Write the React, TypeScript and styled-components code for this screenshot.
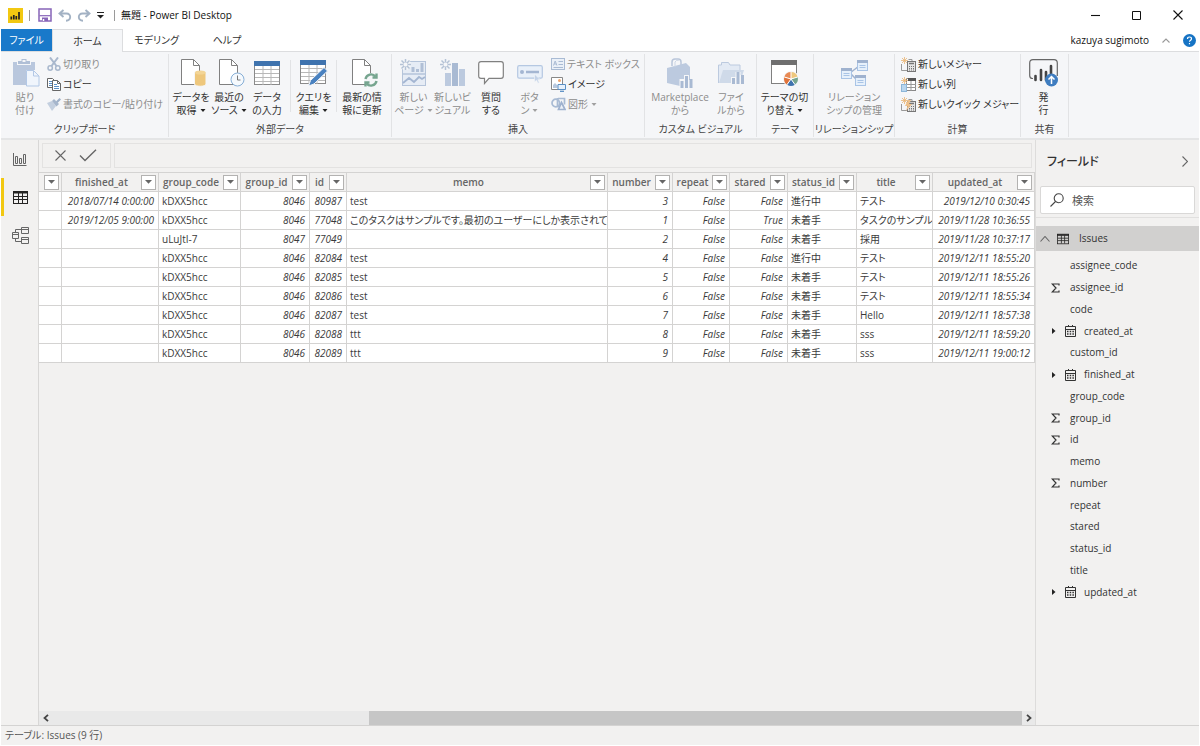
import React from 'react';
import styled, { createGlobalStyle, css } from 'styled-components';

const GlobalStyle = createGlobalStyle`
  *, *::before, *::after { box-sizing: border-box; }
  body {
    margin: 0;
    background: #fff;
    color: #333;
    font-family: 'Open Sans', 'Noto Sans CJK JP', sans-serif;
    font-size: 10px;
    line-height: 13px;
    font-feature-settings: 'palt';
  }
  button, input {
    font: inherit;
    font-feature-settings: inherit;
    color: inherit;
    margin: 0;
    padding: 0;
    border: 0;
    background: none;
  }
  svg { display: block; flex: none; }
`;

const Window = styled.div`
  min-height: 100vh;
  display: flex;
  flex-direction: column;
  padding: 0 1px 1px;
`;

/* ---------- title bar ---------- */

const TitleBar = styled.header`
  height: 29px;
  display: flex;
  align-items: center;
  padding: 1px 1px 0 7px;
`;
const IconButton = styled.button<{ $w: number }>`
  width: ${(p) => p.$w}px;
  height: 20px;
  display: flex;
  align-items: center;
  justify-content: center;
`;
const TitleRule = styled.span`
  width: 1px;
  height: 11px;
  margin: 0 6px;
  background: #9a9a9a;
`;
const Title = styled.h1`
  margin: 0;
  font-size: 10px;
  line-height: 16px;
  font-weight: 400;
  color: #111;
  flex: 1;
`;

/* ---------- tabs ---------- */

const TabRow = styled.nav`
  height: 23px;
  display: flex;
  background: linear-gradient(#dcdddf, #dcdddf) bottom / 100% 1px no-repeat;
`;
const Tab = styled.button<{ $w: number; $kind?: 'file' | 'active' }>`
  width: ${(p) => p.$w}px;
  height: 22px;
  ${(p) => p.$kind === 'file' && css`
    background: #1979ca;
    color: #fff;
  `}
  ${(p) => p.$kind === 'active' && css`
    height: 23px;
    background: #f5f6f8;
    border: 1px solid #dcdddf;
    border-bottom: 0;
  `}
`;
const Account = styled.div`
  margin-left: auto;
  height: 22px;
  display: flex;
  align-items: center;
  gap: 3px;
  padding-right: 3px;
  color: #111;
`;

/* ---------- ribbon ---------- */

const Ribbon = styled.section`
  height: 88px;
  display: flex;
  background: #f5f6f8;
  border-bottom: 2px solid #e4e5e6;
`;
const Group = styled.div<{ $w: number }>`
  width: ${(p) => p.$w}px;
  flex: none;
  margin: 2px 0 1px;
  display: flex;
  flex-direction: column;
  border-right: 1px solid #e2e3e5;
`;
const GroupBody = styled.div<{ $pad?: number }>`
  flex: 1;
  display: flex;
  padding-left: ${(p) => p.$pad ?? 0}px;
`;
const GroupLabel = styled.div`
  height: 16px;
  line-height: 16px;
  text-align: center;
  white-space: nowrap;
  color: #444;
`;
const BigButton = styled.button<{ $w: number; $off?: boolean }>`
  width: ${(p) => p.$w}px;
  display: flex;
  flex-direction: column;
  align-items: center;
  gap: 3px;
  padding-top: 4px;
  white-space: nowrap;
  color: ${(p) => (p.$off ? '#8c8c8c' : '#333')};
`;
const BigIcon = styled.span`
  height: 30px;
  display: flex;
  align-items: center;
  justify-content: center;
`;
const SmallColumn = styled.div`
  display: flex;
  flex-direction: column;
  padding-left: 2px;
`;
const SmallButton = styled.button<{ $off?: boolean }>`
  height: 20px;
  display: flex;
  align-items: center;
  gap: 2px;
  white-space: nowrap;
  color: ${(p) => (p.$off ? '#8c8c8c' : '#333')};
`;
const Divider = styled.span`
  width: 1px;
  height: 52px;
  margin: 6px 4px 0;
  background: #e2e3e5;
`;
const CaretBox = styled.span`
  display: inline-block;
  vertical-align: middle;
  margin-left: 3px;
`;

/* ---------- body ---------- */

const Body = styled.div`
  flex: 1;
  display: flex;
  background: #f2f1f0;
`;
const SideNav = styled.nav`
  width: 38px;
  border-right: 1px solid #d8d7d6;
`;
const SideButton = styled.button<{ $on?: boolean }>`
  width: 37px;
  height: 38px;
  display: flex;
  align-items: center;
  justify-content: center;
  padding-right: 2px;
  border-left: 3px solid ${(p) => (p.$on ? '#f2c811' : 'transparent')};
`;
const Main = styled.main`
  flex: 1;
  min-width: 0;
  display: flex;
  flex-direction: column;
`;
const FormulaBar = styled.div`
  height: 32px;
  display: flex;
  gap: 3px;
  padding: 3px 3px 4px;
`;
const FormulaActions = styled.div`
  width: 69px;
  display: flex;
  align-items: center;
  border: 1px solid #e3e2e1;
  padding-left: 3px;
`;
const FormulaInput = styled.input`
  flex: 1;
  border: 1px solid #e3e2e1;
  padding: 0 6px;
`;
const Grid = styled.table`
  width: 100%;
  table-layout: fixed;
  border-collapse: separate;
  border-spacing: 0;
  border-top: 1px solid #d4d3d2;
  color: #3a3a3a;
`;
const HeadCell = styled.th`
  height: 19px;
  padding: 0 2px 0 0;
  font-weight: 600;
  color: #666;
  border-right: 1px solid #d4d3d2;
  border-bottom: 1px solid #d4d3d2;
`;
const HeadInner = styled.div`
  height: 18px;
  display: flex;
  align-items: center;
`;
const HeadText = styled.span`
  flex: 1;
  text-align: center;
`;
const FilterButton = styled.button`
  width: 15px;
  height: 15px;
  display: flex;
  align-items: center;
  justify-content: center;
  background: #fff;
  border: 1px solid #b3b2b1;
`;
const Cell = styled.td<{ $num?: boolean }>`
  height: 19px;
  padding: 0 4px 0 3px;
  line-height: 18px;
  overflow: hidden;
  white-space: nowrap;
  background: #fff;
  border-right: 1px solid #d4d3d2;
  border-bottom: 1px solid #d4d3d2;
  ${(p) => p.$num && css`
    text-align: right;
    font-style: italic;
  `}
`;
const ScrollBar = styled.div`
  height: 14px;
  margin-top: auto;
  display: flex;
  background: #e9e9e9;
`;
const ScrollButton = styled.button`
  width: 13px;
  display: flex;
  align-items: center;
  justify-content: center;
`;
const ScrollGap = styled.span`
  flex: 317;
`;
const ScrollThumb = styled.span`
  flex: 653;
  background: #c6c6c6;
`;

/* ---------- fields pane ---------- */

const Fields = styled.aside`
  width: 164px;
  border-left: 1px solid #dddcdb;
`;
const FieldsHead = styled.div`
  height: 46px;
  display: flex;
  align-items: center;
  justify-content: space-between;
  padding: 0 10px 3px 11px;
`;
const FieldsTitle = styled.h2`
  margin: 0;
  font-size: 12px;
  line-height: 18px;
  font-weight: 500;
  color: #333;
`;
const Search = styled.label`
  height: 28px;
  margin: 0 4px 3px 4px;
  display: flex;
  align-items: center;
  gap: 8px;
  padding-left: 9px;
  background: #fff;
  border: 1px solid #d9d8d7;
  border-radius: 2px;
`;
const SearchInput = styled.input`
  flex: 1;
  min-width: 0;
  font-size: 11px;
  outline: none;
  &::placeholder { color: #555; opacity: 1; }
`;
const FieldsRule = styled.hr`
  height: 1px;
  margin: 0 0 8px;
  border: 0;
  background: #e1e0df;
`;
const TableRow = styled.button`
  width: 100%;
  height: 25px;
  display: flex;
  align-items: center;
  gap: 7px;
  padding-left: 4px;
  background: #d1d0cf;
`;
const TableName = styled.span`
  margin-left: 3px;
`;
const FieldList = styled.ul`
  min-height: 348px;
  margin: 4px 0 0;
  padding: 0;
  list-style: none;
  display: grid;
  grid-auto-rows: 1fr;
`;
const Field = styled.li`
  display: flex;
  align-items: center;
  padding-left: 12px;
`;
const FieldMark = styled.span`
  width: 22px;
  padding-left: 3px;
`;
const FieldIcon = styled.span`
  width: 14px;
  margin-left: -5px;
  margin-right: 5px;
`;

const StatusBar = styled.footer`
  height: 20px;
  line-height: 19px;
  padding-left: 4px;
  background: #f2f1f0;
  border-top: 1px solid #d4d3d2;
  color: #555;
`;

/* ---------- icons ---------- */

const Caret = ({ off }: { off?: boolean }) => (
  <CaretBox>
    <svg width="6" height="4" viewBox="0 0 6 4"><path d="M.5 0h5L3 3z" fill={off ? '#a0a0a0' : '#222'} /></svg>
  </CaretBox>
);

const LogoIcon = () => (
  <svg width="15" height="15" viewBox="0 0 15 15">
    <rect width="15" height="15" fill="#f2c811" />
    <path d="M3.300 8.500v3M5.800 7v4.500M8.300 8v3.500M11 4v7.500" stroke="#222" strokeWidth="1.700" />
  </svg>
);
const SaveIcon = () => (
  <svg width="14" height="14" viewBox="0 0 14 14" fill="none" stroke="#8764b8" strokeWidth="1.5">
    <path d="M1 1h12v12H1z" />
    <path d="M1.500 7.700h11" strokeWidth="1.200" />
    <path d="M4 9.500h6V13H4z" fill="#8764b8" stroke="none" /><path d="M5.500 11v2" stroke="#fff" />
  </svg>
);
const UndoIcon = ({ flip }: { flip?: boolean }) => (
  <svg width="14" height="13" viewBox="0 0 14 13" fill="none" stroke="#a3b2c4" strokeWidth="1.9">
    <g transform={flip ? 'matrix(-1 0 0 1 14 0)' : undefined}>
      <path d="M5.500 1L1.500 4.500 5.500 8M1.800 4.500H8.500c5 0 5 7-.5 7.200" />
    </g>
  </svg>
);
const PasteIcon = () => (
  <svg width="31" height="28" viewBox="-3 0 31 28">
    <path d="M0 3h4v3h14V3h4v8h-9v15H0z" fill="#b9c7dd" />
    <path d="M5 5V2h3.500V0h5v2H17v3z" fill="#b0bfd6" /><rect x="9.500" y="1" width="3" height="2" fill="#f5f6f8" />
    <path d="M13.500 11.500h7l5.500 5.500v10h-12.500z" fill="#f0f5fc" stroke="#b3c8e6" />
    <path d="M20.500 11.500V17H26" fill="none" stroke="#b3c8e6" />
  </svg>
);
const CutIcon = () => (
  <svg width="14" height="14" viewBox="0 0 14 14" fill="none" stroke="#a9b8cd" strokeWidth="1.5">
    <path d="M3 0.500L9.500 9M11 0.500L4.500 9" strokeWidth="2" />
    <circle cx="3.200" cy="11" r="2.200" /><circle cx="10.800" cy="11" r="2.200" />
  </svg>
);
const CopyIcon = () => (
  <svg width="14" height="14" viewBox="0 0 14 14" fill="#fff" stroke="#666">
    <path d="M.5 1.500h5l2 2v7h-7z" /><path d="M2 4.500h3M2 6.500h3M2 8.500h3" stroke="#5b8fc4" />
    <path d="M5.500 3.500h5l3 3v7h-8z" /><path d="M10.500 3.500v3h3" fill="none" /><path d="M7 7.500h3M7 9.500h5M7 11.500h5" stroke="#5b8fc4" />
  </svg>
);
const BrushIcon = () => (
  <svg width="14" height="13" viewBox="0 0 14 13">
    <path d="M0 5l5-2 4 5-4 5z" fill="#c3cfdf" /><path d="M5 3l2-2 5 5-2.500 2.500z" fill="#a6b6cc" /><path d="M9 3.500L12.500 0 14 1.500 10.500 5z" fill="#9eb0c8" />
  </svg>
);
const PagePath = () => (
  <>
    <path d="M.5.5h12l6 6v19H.5z" fill="#fff" stroke="#808080" />
    <path d="M12.500.5v6h6" fill="none" stroke="#808080" />
  </>
);
const GetDataIcon = () => (
  <svg width="31" height="28" viewBox="-5 0 31 28">
    <PagePath />
    <path d="M13.500 13v12c0 3 11.500 3 11.500 0V13z" fill="#eec77c" stroke="#f5f6f8" /><ellipse cx="19.300" cy="13.500" rx="5.300" ry="2" fill="#f3d596" />
  </svg>
);
const RecentIcon = () => (
  <svg width="31" height="28" viewBox="-5 0 31 28">
    <PagePath />
    <circle cx="18.500" cy="20.500" r="6.500" fill="#f5f9fd" stroke="#86aed6" /><path d="M18.500 16.500v4.500h3" fill="none" stroke="#777" />
  </svg>
);
const TablePaths = () => (
  <>
    <rect x=".5" y=".5" width="25" height="23" fill="#fff" stroke="#8a8a8a" />
    <path d="M1 8.500h24M1 12.500h24M1 16.500h24M1 20.500h24M9 5v19M17 5v19" stroke="#b8b8b8" />
    <rect width="26" height="5" fill="#3f73ae" />
  </>
);
const EnterDataIcon = () => (
  <svg width="26" height="24" viewBox="0 0 26 24"><TablePaths /></svg>
);
const EditQueryIcon = () => (
  <svg width="28" height="28" viewBox="0 0 28 28">
    <g transform="translate(0 1)"><TablePaths /></g>
    <path d="M8.500 27l2-5.500L24 8.500l3.500 3.500L14 25z" fill="#4a82c0" stroke="#f5f6f8" />
  </svg>
);
const RefreshIcon = () => (
  <svg width="31" height="28" viewBox="-5 0 31 28">
    <PagePath />
    <circle cx="19" cy="21" r="7" fill="#f5f6f8" />
    <g fill="none" stroke="#76a58f" strokeWidth="2.400">
      <path d="M13.500 20c1-5 7-6 10-2.500M24.500 22c-1 5-7 6-10 2.500" /><path d="M24.500 14.500v4h-4M13.500 27.500v-4h4" />
    </g>
  </svg>
);
const Burst = () => (
  <>
    <circle cx="5.500" cy="5.500" r="5.500" fill="#f5f6f8" />
    <path d="M5.500 0v11M0 5.500h11M1.500 1.500l8 8M9.500 1.500l-8 8" stroke="#b4c2d5" strokeWidth="1.500" />
    <circle cx="5.500" cy="5.500" r="2" fill="#f5f6f8" />
  </>
);
const NewPageIcon = () => (
  <svg width="27" height="28" viewBox="0 0 27 28">
    <rect x="2.500" y="2.500" width="23" height="24" fill="#e6ecf5" stroke="#b5c4da" /><path d="M2.500 15h23" stroke="#b5c4da" strokeWidth="1.500" />
    <path d="M13 8v5M17.500 10v3M22 4v9" stroke="#b0bfd6" strokeWidth="3" />
    <path d="M3 24l6-5 5 4 5-5 3 2 3-2" fill="none" stroke="#a4b6d2" strokeWidth="1.800" />
    <Burst />
  </svg>
);
const NewVisualIcon = () => (
  <svg width="26" height="28" viewBox="0 0 26 28">
    <path d="M5 14h6v13H5z" fill="#bccadf" /><path d="M12 4h6v23h-6z" fill="#a9bad3" /><path d="M19 10h6v17h-6z" fill="#bccadf" />
    <Burst />
  </svg>
);
const QuestionIcon = () => (
  <svg width="26" height="24" viewBox="0 0 26 24">
    <path d="M3 .7h20q2.300 0 2.300 2.300v12q0 2.300-2.300 2.300H11L6.500 22.500V17.300H3Q.7 17.300.7 15V3Q.7.7 3 .7z" fill="#fff" stroke="#808080" strokeWidth="1.200" />
  </svg>
);
const ButtonIcon = () => (
  <svg width="26" height="22" viewBox="0 -3 26 22">
    <rect x=".7" y=".7" width="24.600" height="12.500" rx="1.500" fill="#e9f0f9" stroke="#b5c8e2" strokeWidth="1.200" />
    <circle cx="5" cy="7" r="2" fill="#a4b6d2" /><path d="M9 7h13" stroke="#a4b6d2" strokeWidth="2.500" />
    <path d="M17.500 9v8l2-1.800 1.500 3 1.300-.7-1.500-2.800h2.500z" fill="#c3d2e8" stroke="#f5f6f8" strokeWidth=".6" />
  </svg>
);
const TextBoxIcon = () => (
  <svg width="14" height="12" viewBox="0 0 14 12" fill="none" stroke="#a9bbd4">
    <rect x=".5" y=".5" width="13" height="11" fill="#eaf0f8" /><path d="M2.500 7.500l1.700-4.500 1.700 4.500M3.200 6h2M7.500 3.500H12M7.500 6.500H12M2.500 9.500H12" />
  </svg>
);
const ImageIcon = () => (
  <svg width="15" height="15" viewBox="0 0 15 15">
    <path d="M.5.5h11v12H.5z" fill="#fff" stroke="#888" /><circle cx="8.500" cy="3.500" r="1.500" fill="#eea56d" />
    <path d="M2 11V8l2-2 2.500 2.500V11z" fill="#b8c8dd" />
    <path d="M7 7.500h7.500v5H7z" fill="#e8f1fb" stroke="#5b8fc4" /><path d="M9 14.300h4" stroke="#5b8fc4" strokeWidth="1.300" />
  </svg>
);
const ShapesIcon = () => (
  <svg width="15" height="14" viewBox="0 0 15 14" fill="none" strokeWidth="1.700">
    <circle cx="4.800" cy="6" r="3.800" stroke="#a9bbd4" /><path d="M7 1.500h6.500v6" stroke="#a9bbd4" /><path d="M6.500 1v8.500H9" stroke="#a9bbd4" />
    <path d="M10.500 5.500l3.500 7H7.500z" fill="#eef2f8" stroke="#9fb2cf" />
  </svg>
);
const MarketIcon = () => (
  <svg width="28" height="30" viewBox="0 0 28 30">
    <path d="M6 8V4q0-3 3-3h3q3 0 3 3v5" fill="none" stroke="#b9c6da" strokeWidth="1.500" />
    <path d="M1 10L20 5l4 4v16l-10 3-13-3z" fill="#bccadf" /><path d="M9 9V4q1-2 4-2" fill="none" stroke="#ccd6e5" />
    <path d="M16 30V21M20.500 30V17M25 30V22" stroke="#f5f6f8" strokeWidth="5" /><path d="M16 30V23M20.500 30V18M25 30V21" stroke="#a9bad3" strokeWidth="3" />
  </svg>
);
const FileVisualIcon = () => (
  <svg width="27" height="26" viewBox="0 0 27 26">
    <path d="M.5 23V5h3V2.500h7L12 5h10v5" fill="#e3eaf4" stroke="#bccadf" /><path d="M1 23L5 10h21l-4 13z" fill="#cfdae9" />
    <path d="M15.500 24v-7M20 24V12M24.500 24v-9" stroke="#f5f6f8" strokeWidth="5" /><path d="M15.500 24v-6M20 24V12M24.500 24v-9" stroke="#a9bad3" strokeWidth="3" />
  </svg>
);
const ThemeIcon = () => (
  <svg width="28" height="28" viewBox="0 0 28 28">
    <rect x=".5" y="1.500" width="25" height="23" fill="#fff" stroke="#808080" /><rect y="1" width="26" height="5" fill="#6f6f6f" />
    <circle cx="20" cy="20" r="8" fill="#f5f6f8" />
    <path d="M20 20V13a7 7 0 0 1 6.700 5z" fill="#eec77c" /><path d="M20 20l6.700-2a7 7 0 0 1-2.700 7.500z" fill="#76a58f" />
    <path d="M20 20l4 5.700a7 7 0 0 1-8 0z" fill="#3f73ae" /><path d="M20 20l-4 5.700a7 7 0 0 1-2.700-7.700z" fill="#e0743c" /><path d="M20 20l-6.700-2A7 7 0 0 1 20 13z" fill="#e88a54" />
    <path d="M20 20v-7M20 20l6.700-2M20 20l4 5.700M20 20l-4 5.700M20 20l-6.700-2" stroke="#fff" />
  </svg>
);
const RelationIcon = () => (
  <svg width="27" height="26" viewBox="0 0 27 26">
    <path d="M9 13L18 6M9 13l7 7" stroke="#9fb2cf" strokeWidth="1.500" />
    {[[0, 8], [16, 0], [14, 15]].map(([x, y]) => (
      <g key={x} transform={`translate(${x} ${y})`}>
        <rect x=".5" y=".5" width="10" height="10" fill="#e6f0fb" stroke="#a9c4e6" /><path d="M0 1.500h11" stroke="#9fb2cf" strokeWidth="3" /><path d="M2.500 5.500h6M2.500 7.500h6" stroke="#a9c4e6" />
      </g>
    ))}
  </svg>
);
const Spark = () => <path d="M3.500 0v7M0 3.500h7M1 1l5 5M6 1L1 6" stroke="#eab676" strokeWidth=".8" />;
const MeasureIcon = ({ quick }: { quick?: boolean }) => (
  <svg width="15" height="15" viewBox="0 0 15 15">
    <path d="M.5 7v6.500H6M7.500 2.500H11v2" fill="none" stroke="#999" /><rect x="6.500" y="4.500" width="8" height="10" fill="#e5e5e5" stroke="#777" />
    <path d="M8 6.500h5" stroke="#777" strokeWidth="1.500" /><path d="M8 9.500h5M8 11.500h5M8 13h5" stroke="#777" strokeDasharray="1 1" /><Spark />
    {quick && <path d="M7 3l3 0-2 4h3l-6 7 1.500-5H4z" fill="#eec08a" />}
  </svg>
);
const ColumnIcon = () => (
  <svg width="15" height="15" viewBox="0 0 15 15">
    <rect x="5.500" y="1.500" width="9" height="12" fill="#fff" stroke="#888" /><path d="M7 2.500h8" stroke="#555" strokeWidth="3" />
    <path d="M5 7.500h10M5 10.500h10M10 4v10" stroke="#999" /><rect x=".5" y="7.500" width="5" height="7" fill="#b9d6ee" stroke="#8db6d8" /><Spark />
  </svg>
);
const PublishIcon = () => (
  <svg width="29" height="28" viewBox="0 0 29 28">
    <path d="M4 19.500H3.500Q.7 19.500.7 16.500V4Q.7.7 4 .7H25Q28.300.7 28.300 4V17" fill="none" stroke="#666" strokeWidth="1.200" />
    <path d="M6.500 21v-4M12 21V11M17 21v-8M22 17V7" stroke="#444" strokeWidth="2.600" strokeLinecap="round" />
    <circle cx="22.500" cy="21" r="6.500" fill="#3f7dc0" /><path d="M22.500 25v-7M19.500 20.500l3-3 3 3" fill="none" stroke="#fff" strokeWidth="1.500" />
  </svg>
);
const ReportIcon = () => (
  <svg width="14" height="13" viewBox="0 0 14 13" fill="none" stroke="#666">
    <path d="M.5 0v12.500H13.500M2.500 10.500V3.500h2v7zM6.500 10.500v-5h2v5zM10.500 10.500V1.500h2v9z" />
  </svg>
);
const DataIcon = ({ w = 15 }: { w?: number }) => (
  <svg width={w} height={w} viewBox="0 0 15 15" fill="none" stroke="#252423">
    <rect x=".5" y="1.500" width="14" height="12" /><path d="M0 2.500h15" strokeWidth="2" /><path d="M1 6.500h13M1 9.500h13M5.500 3v10M9.500 3v10" />
  </svg>
);
const ModelIcon = () => (
  <svg width="17" height="17" viewBox="0 0 17 17" fill="none" stroke="#666">
    <path d="M.5 5.500h6v6h-6zM.5 7.500h6M9.500.5h7v6h-7zM9.500 2.500h7M9.500 10.500h7v6h-7zM9.500 12.500h7M3.500 5.500v-3h6M3.500 11.500v3h6" />
  </svg>
);
const SearchIcon = () => (
  <svg width="14" height="14" viewBox="0 0 14 14" fill="none" stroke="#444" strokeWidth="1.100">
    <circle cx="8.700" cy="5.300" r="4.500" /><path d="M5.500 8.500L.5 13.500" />
  </svg>
);
const CalendarIcon = () => (
  <svg width="12" height="12" viewBox="0 0 12 12" fill="none" stroke="#333">
    <path d="M.5 1.500h10v10H.5zM.5 4.500h10M3.500 0v2M7.500 0v2" /><path d="M2 6.500h7M2 9h7" strokeWidth="1.400" strokeDasharray="1.500 1.200" />
  </svg>
);
const SigmaIcon = () => (
  <svg width="9" height="10" viewBox="0 0 9 10" fill="none" stroke="#333" strokeWidth="1.200"><path d="M8 2.500V1H1.200L5 5 1.200 9H8V7.500" /></svg>
);
const Line = ({ d, w, h, color = '#444', sw = 1.1 }: { d: string; w: number; h: number; color?: string; sw?: number }) => (
  <svg width={w} height={h} viewBox={`0 0 ${w} ${h}`} fill="none" stroke={color} strokeWidth={sw}><path d={d} /></svg>
);

/* ---------- data ---------- */

type Column = { name: string; width?: number; num?: boolean };
const columns: Column[] = [
  { name: '', width: 23 },
  { name: 'finished_at', width: 97, num: true },
  { name: 'group_code', width: 82 },
  { name: 'group_id', width: 69, num: true },
  { name: 'id', width: 37, num: true },
  { name: 'memo' },
  { name: 'number', width: 65, num: true },
  { name: 'repeat', width: 57, num: true },
  { name: 'stared', width: 58, num: true },
  { name: 'status_id', width: 69 },
  { name: 'title', width: 76 },
  { name: 'updated_at', width: 102, num: true },
];
const rows = [
  ['', '2018/07/14 0:00:00', 'kDXX5hcc', '8046', '80987', 'test', '3', 'False', 'False', '進行中', 'テスト', '2019/12/10 0:30:45'],
  ['', '2019/12/05 9:00:00', 'kDXX5hcc', '8046', '77048', 'このタスクはサンプルです。最初のユーザーにしか表示されていま', '1', 'False', 'True', '未着手', 'タスクのサンプル', '2019/11/28 10:36:55'],
  ['', '', 'uLuJtI-7', '8047', '77049', '', '2', 'False', 'False', '未着手', '採用', '2019/11/28 10:37:17'],
  ['', '', 'kDXX5hcc', '8046', '82084', 'test', '4', 'False', 'False', '進行中', 'テスト', '2019/12/11 18:55:20'],
  ['', '', 'kDXX5hcc', '8046', '82085', 'test', '5', 'False', 'False', '未着手', 'テスト', '2019/12/11 18:55:26'],
  ['', '', 'kDXX5hcc', '8046', '82086', 'test', '6', 'False', 'False', '未着手', 'テスト', '2019/12/11 18:55:34'],
  ['', '', 'kDXX5hcc', '8046', '82087', 'test', '7', 'False', 'False', '未着手', 'Hello', '2019/12/11 18:57:38'],
  ['', '', 'kDXX5hcc', '8046', '82088', 'ttt', '8', 'False', 'False', '未着手', 'sss', '2019/12/11 18:59:20'],
  ['', '', 'kDXX5hcc', '8046', '82089', 'ttt', '9', 'False', 'False', '未着手', 'sss', '2019/12/11 19:00:12'],
];
const fields: [string, ('sum' | 'date')?][] = [
  ['assignee_code'], ['assignee_id', 'sum'], ['code'], ['created_at', 'date'], ['custom_id'],
  ['finished_at', 'date'], ['group_code'], ['group_id', 'sum'], ['id', 'sum'], ['memo'],
  ['number', 'sum'], ['repeat'], ['stared'], ['status_id'], ['title'], ['updated_at', 'date'],
];

type BigProps = { w: number; icon: React.ReactNode; lines: [string, string]; off?: boolean; caret?: boolean };
const Big = ({ w, icon, lines, off, caret }: BigProps) => (
  <BigButton $w={w} $off={off}>
    <BigIcon>{icon}</BigIcon>
    <span>{lines[0]}<br />{lines[1]}{caret && <Caret off={off} />}</span>
  </BigButton>
);

export default function App() {
  return (
    <Window>
      <GlobalStyle />
      <TitleBar>
        <LogoIcon />
        <TitleRule />
        <IconButton $w={18} aria-label="保存"><SaveIcon /></IconButton>
        <IconButton $w={21} aria-label="元に戻す"><UndoIcon /></IconButton>
        <IconButton $w={18} aria-label="やり直し"><UndoIcon flip /></IconButton>
        <IconButton $w={15} aria-label="カスタマイズ">
          <svg width="7" height="7" viewBox="0 0 7 7"><path d="M0 .5h7" stroke="#222" /><path d="M0 3h7L3.500 6.500z" fill="#222" /></svg>
        </IconButton>
        <TitleRule />
        <Title>無題 - Power BI Desktop</Title>
        <IconButton $w={41} aria-label="最小化"><Line w={9} h={9} d="M0 4.500h9" color="#111" /></IconButton>
        <IconButton $w={41} aria-label="最大化"><Line w={9} h={9} d="M.5.5h8v8h-8z" color="#111" sw={1} /></IconButton>
        <IconButton $w={41} aria-label="閉じる"><Line w={10} h={10} d="M.5.5l9 9M9.500.5l-9 9" color="#111" /></IconButton>
      </TitleBar>

      <TabRow>
        <Tab $w={51} $kind="file">ファイル</Tab>
        <Tab $w={71} $kind="active">ホーム</Tab>
        <Tab $w={67}>モデリング</Tab>
        <Tab $w={74}>ヘルプ</Tab>
        <Account>
          kazuya sugimoto
          <IconButton $w={28} aria-label="リボンを折りたたむ"><Line w={8} h={5} d="M.5 4.500L4 1l3.500 3.500" color="#999" /></IconButton>
          <IconButton $w={13} aria-label="ヘルプを表示">
            <svg width="13" height="13" viewBox="0 0 13 13">
              <circle cx="6.500" cy="6.500" r="6.500" fill="#1673c4" />
              <path d="M4.500 5q0-2 2-2t2 1.800q0 1-1.200 1.700-.8.500-.8 1.300M6.500 9v1.300" fill="none" stroke="#fff" strokeWidth="1.200" />
            </svg>
          </IconButton>
        </Account>
      </TabRow>

      <Ribbon>
        <Group $w={168}>
          <GroupBody $pad={4}>
            <Big w={40} off icon={<PasteIcon />} lines={['貼り', '付け']} />
            <SmallColumn>
              <SmallButton $off><CutIcon />切り取り</SmallButton>
              <SmallButton><CopyIcon />コピー</SmallButton>
              <SmallButton $off><BrushIcon />書式のコピー/貼り付け</SmallButton>
            </SmallColumn>
          </GroupBody>
          <GroupLabel>クリップボード</GroupLabel>
        </Group>
        <Group $w={223}>
          <GroupBody $pad={3}>
            <Big w={38} icon={<GetDataIcon />} lines={['データを', '取得']} caret />
            <Big w={38} icon={<RecentIcon />} lines={['最近の', 'ソース']} caret />
            <Big w={38} icon={<EnterDataIcon />} lines={['データ', 'の入力']} />
            <Divider />
            <Big w={37} icon={<EditQueryIcon />} lines={['クエリを', '編集']} caret />
            <Divider />
            <Big w={42} icon={<RefreshIcon />} lines={['最新の情', '報に更新']} />
          </GroupBody>
          <GroupLabel>外部データ</GroupLabel>
        </Group>
        <Group $w={253}>
          <GroupBody $pad={2}>
            <Big w={39} off icon={<NewPageIcon />} lines={['新しい', 'ページ']} caret />
            <Big w={39} off icon={<NewVisualIcon />} lines={['新しいビ', 'ジュアル']} />
            <Big w={38} icon={<QuestionIcon />} lines={['質問', 'する']} />
            <Big w={39} off icon={<ButtonIcon />} lines={['ボタ', 'ン']} caret />
            <SmallColumn>
              <SmallButton $off><TextBoxIcon />テキスト ボックス</SmallButton>
              <SmallButton><ImageIcon />イメージ</SmallButton>
              <SmallButton $off><ShapesIcon /><span>図形<Caret off /></span></SmallButton>
            </SmallColumn>
          </GroupBody>
          <GroupLabel>挿入</GroupLabel>
        </Group>
        <Group $w={112}>
          <GroupBody $pad={3}>
            <Big w={64} off icon={<MarketIcon />} lines={['Marketplace', 'から']} />
            <Big w={38} off icon={<FileVisualIcon />} lines={['ファイ', 'ルから']} />
          </GroupBody>
          <GroupLabel>カスタム ビジュアル</GroupLabel>
        </Group>
        <Group $w={57}>
          <GroupBody>
            <Big w={55} icon={<ThemeIcon />} lines={['テーマの切', 'り替え']} caret />
          </GroupBody>
          <GroupLabel>テーマ</GroupLabel>
        </Group>
        <Group $w={81}>
          <GroupBody>
            <Big w={80} off icon={<RelationIcon />} lines={['リレーション', 'シップの管理']} />
          </GroupBody>
          <GroupLabel>リレーションシップ</GroupLabel>
        </Group>
        <Group $w={126}>
          <GroupBody $pad={4}>
            <SmallColumn>
              <SmallButton><MeasureIcon />新しいメジャー</SmallButton>
              <SmallButton><ColumnIcon />新しい列</SmallButton>
              <SmallButton><MeasureIcon quick />新しいクイック メジャー</SmallButton>
            </SmallColumn>
          </GroupBody>
          <GroupLabel>計算</GroupLabel>
        </Group>
        <Group $w={48}>
          <GroupBody>
            <Big w={45} icon={<PublishIcon />} lines={['発', '行']} />
          </GroupBody>
          <GroupLabel>共有</GroupLabel>
        </Group>
      </Ribbon>

      <Body>
        <SideNav>
          <SideButton aria-label="レポート"><ReportIcon /></SideButton>
          <SideButton $on aria-label="データ"><DataIcon /></SideButton>
          <SideButton aria-label="モデル"><ModelIcon /></SideButton>
        </SideNav>
        <Main>
          <FormulaBar>
            <FormulaActions>
              <IconButton $w={28} aria-label="キャンセル"><Line w={11} h={11} d="M.5.5l10 10M10.500.5l-10 10" color="#666" /></IconButton>
              <IconButton $w={28} aria-label="確定"><Line w={18} h={13} d="M1 6.500l5 5L17 .8" color="#666" sw={1.4} /></IconButton>
            </FormulaActions>
            <FormulaInput aria-label="数式" />
          </FormulaBar>
          <Grid>
            <colgroup>
              {columns.map((c) => <col key={c.name} width={c.width} />)}
            </colgroup>
            <thead>
              <tr>
                {columns.map((c) => (
                  <HeadCell key={c.name}>
                    <HeadInner>
                      <HeadText>{c.name}</HeadText>
                      <FilterButton aria-label={`${c.name} フィルター`}>
                        <svg width="7" height="4" viewBox="0 0 7 4"><path d="M0 0h7L3.500 3.800z" fill="#666" /></svg>
                      </FilterButton>
                    </HeadInner>
                  </HeadCell>
                ))}
              </tr>
            </thead>
            <tbody>
              {rows.map((r) => (
                <tr key={r[4]}>
                  {r.map((v, i) => <Cell key={columns[i].name} $num={columns[i].num}>{v}</Cell>)}
                </tr>
              ))}
            </tbody>
          </Grid>
          <ScrollBar>
            <ScrollButton aria-label="左へスクロール"><Line w={6} h={8} d="M5 .8L1.500 4 5 7.200" sw={1.8} /></ScrollButton>
            <ScrollGap />
            <ScrollThumb />
            <ScrollButton aria-label="右へスクロール"><Line w={6} h={8} d="M1 .8L4.500 4 1 7.200" sw={1.8} /></ScrollButton>
          </ScrollBar>
        </Main>
        <Fields>
          <FieldsHead>
            <FieldsTitle>フィールド</FieldsTitle>
            <IconButton $w={8} aria-label="ウィンドウを折りたたむ"><Line w={6} h={11} d="M.5.5l5 5-5 5" color="#666" /></IconButton>
          </FieldsHead>
          <Search>
            <SearchIcon />
            <SearchInput type="text" placeholder="検索" aria-label="検索" />
          </Search>
          <FieldsRule />
          <TableRow>
            <Line w={10} h={6} d="M.5 5.500l4.500-5 4.500 5" color="#666" />
            <DataIcon w={12} />
            <TableName>Issues</TableName>
          </TableRow>
          <FieldList>
            {fields.map(([name, kind]) => (
              <Field key={name}>
                <FieldMark>
                  {kind === 'sum' && <SigmaIcon />}
                  {kind === 'date' && <svg width="5" height="8" viewBox="0 0 5 8"><path d="M1 1L4.500 4 1 7z" fill="#222" /></svg>}
                </FieldMark>
                {kind === 'date' && <FieldIcon><CalendarIcon /></FieldIcon>}
                {name}
              </Field>
            ))}
          </FieldList>
        </Fields>
      </Body>
      <StatusBar>テーブル: Issues (9 行)</StatusBar>
    </Window>
  );
}
